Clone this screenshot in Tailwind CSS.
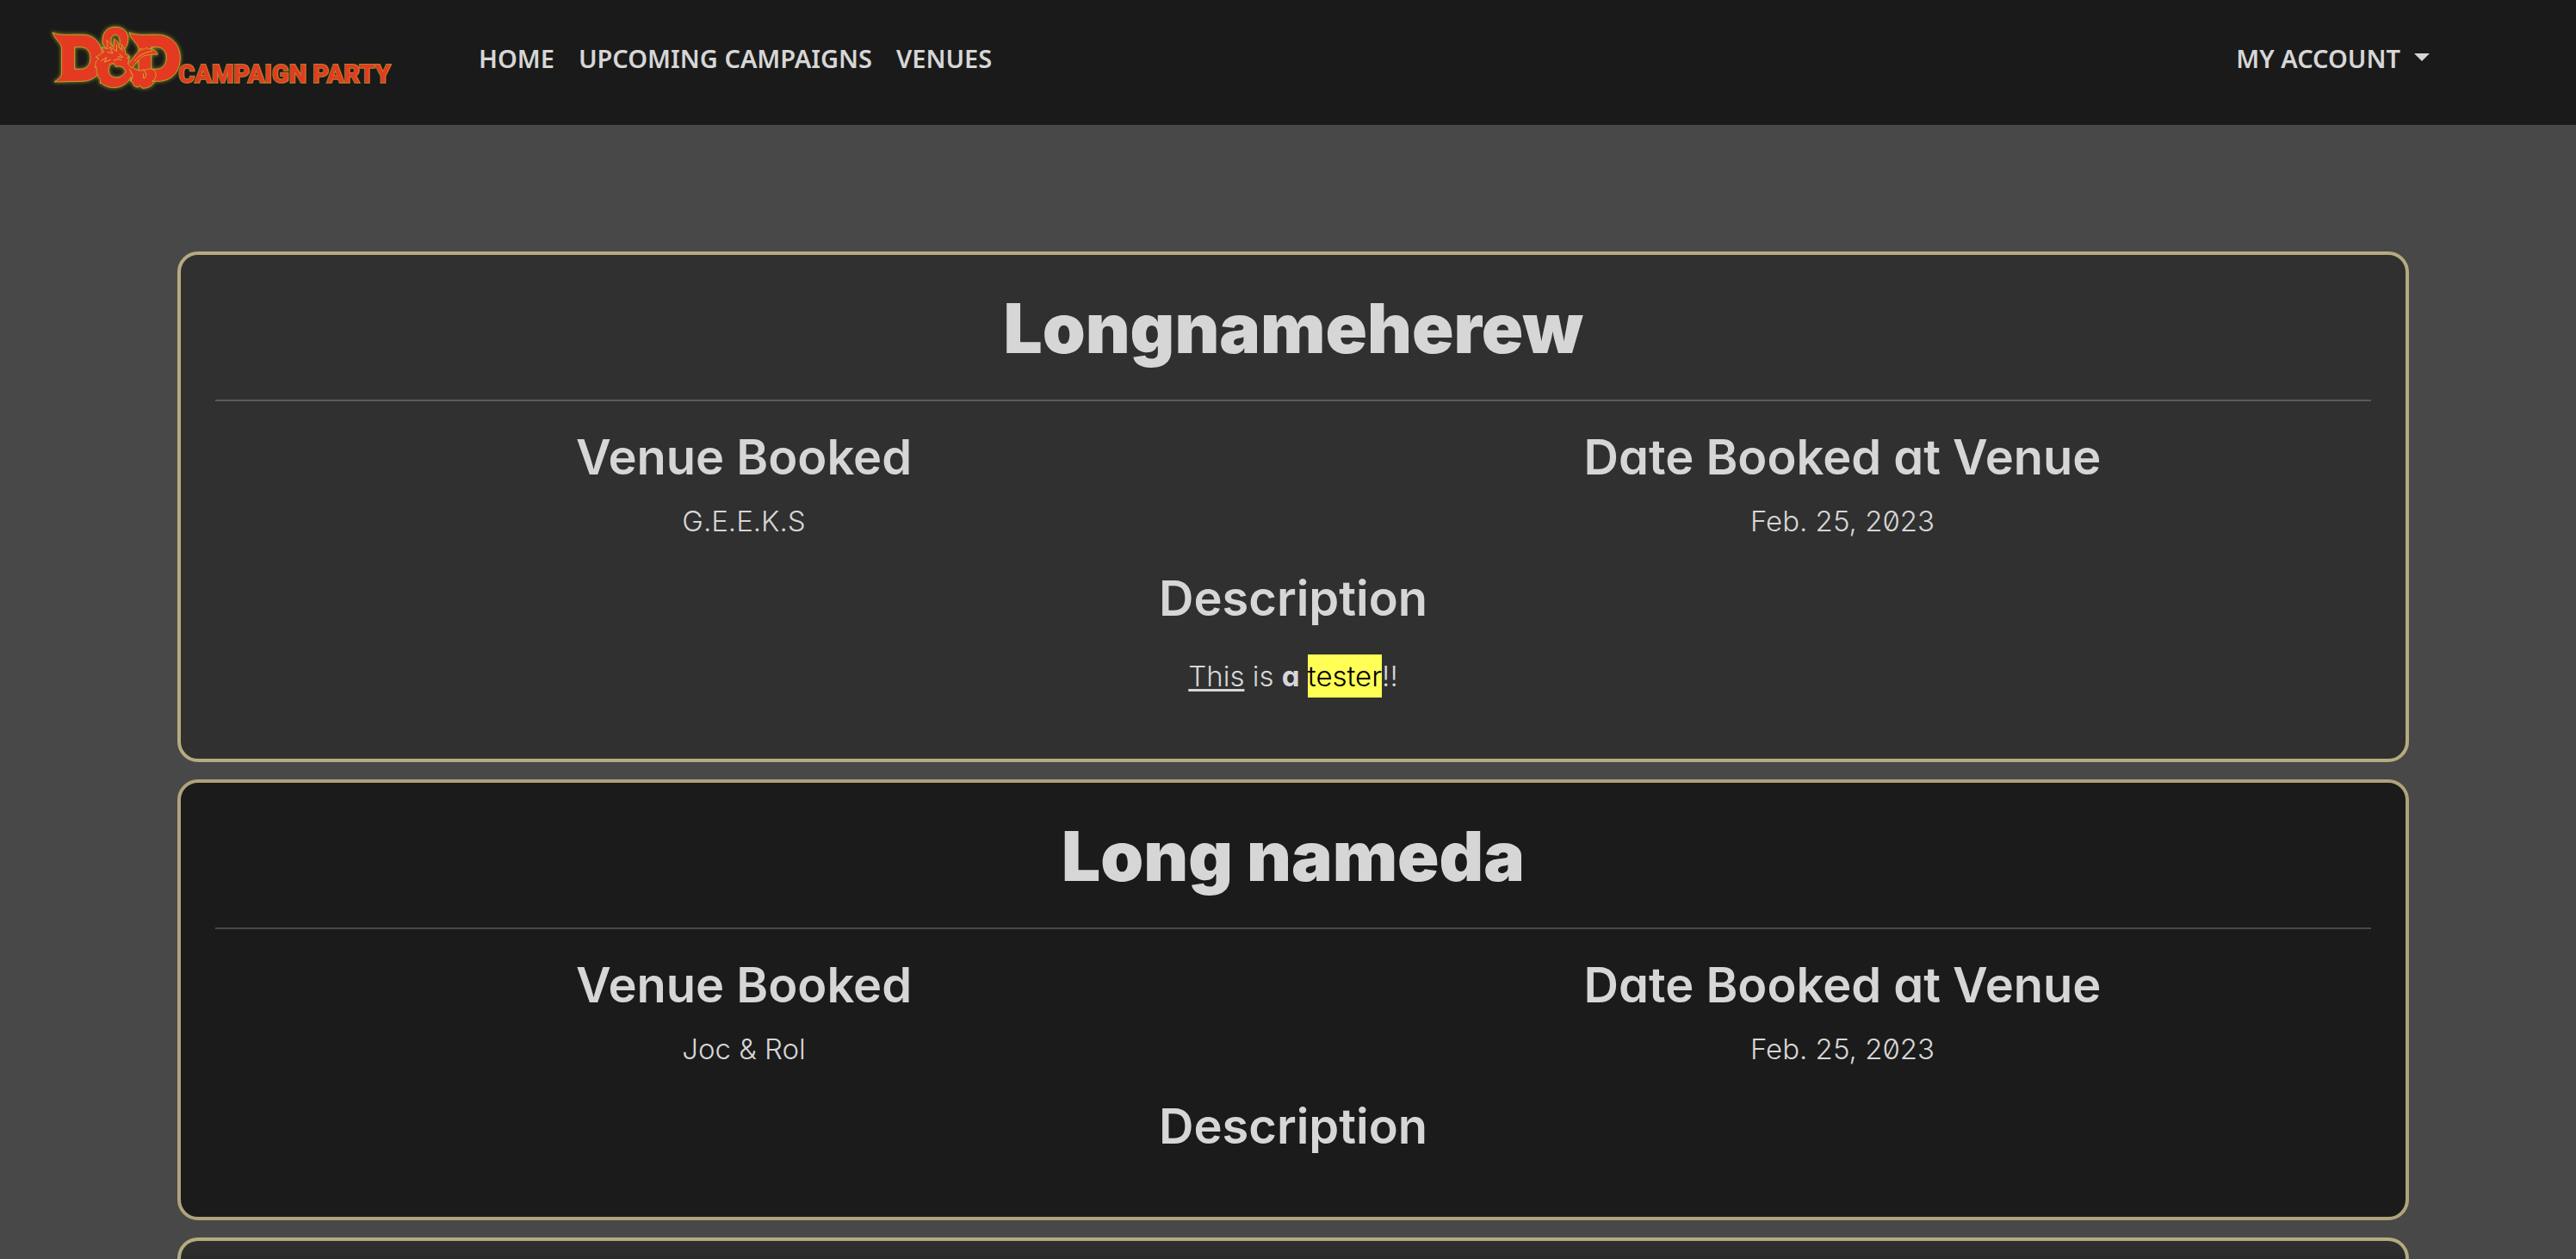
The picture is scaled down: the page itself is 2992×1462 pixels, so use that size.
<!DOCTYPE html>
<html lang="en">
<head>
<meta charset="utf-8">
<meta name="viewport" content="width=device-width, initial-scale=1">
<title>D&amp;D Campaign Party</title>
<script src="https://cdn.jsdelivr.net/npm/@tailwindcss/browser@4"></script>
</head>
<body class="flex h-screen flex-col overflow-hidden bg-[#484848] font-[Inter,sans-serif] text-[#d6d6d6]">

<header class="flex h-[145px] shrink-0 items-start bg-[#1a1a1a] pr-[170px] pl-[55px] font-['Noto_Sans',sans-serif] text-[29px] leading-[48px] font-semibold">
  <a href="#" aria-label="D&amp;D Campaign Party" class="mt-6 shrink-0">
    <svg class="h-[90px] w-[400px]" viewBox="0 0 1200 270">
      <defs>
        <filter id="glow" x="-10%" y="-15%" width="120%" height="130%">
          <feGaussianBlur stdDeviation="7"/>
        </filter>
        <g id="mark" stroke-linejoin="round" fill-rule="evenodd">
          <path d="M18 41C34 50 62 50 90 49L125 49C165 50 192 82 192 130C192 180 166 211 120 211L24 213C42 202 50 196 50 180L50 95C48 76 28 68 18 41ZM95 92L95 169L116 169C140 168 150 152 150 130C150 106 138 92 116 92Z"/>
          <path d="M286 41C302 50 330 50 355 49L385 49C432 51 463 84 463 130C463 178 432 211 385 211L340 211L318 180L318 97C316 78 292 70 286 41ZM362 92L362 169L380 169C403 168 415 152 415 130C415 106 402 92 380 92Z"/>
          <path d="M193 82C188 44 206 23 237 22C268 23 284 42 281 68C279 86 273 96 264 104L249 90C256 80 255 50 238 49C222 50 216 68 226 87L214 105Z"/>
          <path d="M184 205C176 194 170 184 171 160L166 164C168 146 168 140 180 132L168 127C180 122 186 114 197 109L189 93L211 98L207 67L231 94L233 63C246 74 249 83 250 94L262 104L258 82C270 96 272 105 273 117L284 121L278 132L287 124L281 148L292 157C310 178 330 176 350 168C378 164 384 186 374 204L365 211L373 210C368 228 348 236 330 235L323 226C316 236 298 230 299 216L290 210L292 196C278 220 258 233 230 233C209 232 193 224 190 217L184 219ZM218 152C206 184 220 199 243 198C260 196 270 186 273 176L264 162L248 158L239 161L232 148Z"/>
          <path d="M280 151C302 133 306 112 326 103L322 98L338 100L345 94L353 99L367 95L362 101C373 101 382 108 384 118C366 115 350 119 336 123C321 129 308 151 294 165Z"/>
        </g>
      </defs>
      <use href="#mark" fill="#a7a52b" stroke="#a7a52b" stroke-width="6" filter="url(#glow)" opacity="0.75"/>
      <use href="#mark" fill="#e53a22" stroke="#c6a02f" stroke-width="3"/>
      <g fill="none" stroke="#d0ac33" stroke-width="3" stroke-linecap="round" stroke-linejoin="round">
        <path d="M188 139L206 128L199 144L220 136M209 109L228 114L217 91L242 107L241 84M251 116L263 127L246 126M232 139L246 133L258 137"/>
        <path d="M304 140C320 119 342 110 364 106M287 170L298 193L292 209M334 170C345 181 350 192 336 202L334 186"/>
      </g>
      <text x="457" y="217" fill="#e53a22" stroke="#a98426" stroke-width="6" paint-order="stroke" class="font-[Roboto,sans-serif] text-[87px] font-extrabold">CAMPAIGN PARTY</text>
    </svg>
  </a>
  <nav class="mt-11 ml-[101px] flex gap-7" aria-label="Main">
    <a href="#">HOME</a>
    <a href="#">UPCOMING CAMPAIGNS</a>
    <a href="#">VENUES</a>
  </nav>
  <button type="button" class="mt-11 ml-auto flex items-center gap-4">
    MY ACCOUNT
    <svg class="mb-1 h-[9px] w-[18px] fill-current" viewBox="0 0 18 9"><path d="M0 0H18L9 9Z"/></svg>
  </button>
</header>

<main class="flex min-h-0 grow flex-col gap-5 pt-[147px] pr-[194px] pl-[206px] text-center">

  <article class="shrink-0 rounded-3xl border-4 border-[#b5ab80] bg-[#303030] px-10 pt-10 pb-[71px]">
    <h2 class="text-[80px] leading-[90px] font-black">Longnameherew</h2>
    <hr class="mt-[38px] mb-8 border-t-2 border-[#5a5a5a]">
    <div class="-mx-6 grid grid-cols-2">
      <section>
        <h3 class="text-[56px] leading-[66px] font-semibold">Venue Booked</h3>
        <p class="mt-4 text-[33px] leading-[50px] font-light">G.E.E.K.S</p>
      </section>
      <section>
        <h3 class="text-[56px] leading-[66px] font-semibold [font-feature-settings:'cv11']">Date Booked at Venue</h3>
        <p class="mt-4 text-[33px] leading-[50px] font-light [font-feature-settings:'zero']">Feb. 25, 2023</p>
      </section>
    </div>
    <h3 class="mt-8 text-[56px] leading-[66px] font-semibold">Description</h3>
    <p class="mt-8 text-[33px] leading-[50px] font-light [font-feature-settings:'cv11']"><u class="underline decoration-[3px] underline-offset-[3px]">This</u> is <strong class="font-bold">a</strong> <mark class="bg-[#ffff55] py-[5px] text-black">tester</mark>!!</p>
  </article>

  <article class="shrink-0 rounded-3xl border-4 border-[#aea37a] bg-[#1b1b1b] px-10 pt-10 pb-[72px]">
    <h2 class="text-[80px] leading-[90px] font-black">Long nameda</h2>
    <hr class="mt-[38px] mb-8 border-t-2 border-[#494949]">
    <div class="-mx-6 grid grid-cols-2">
      <section>
        <h3 class="text-[56px] leading-[66px] font-semibold">Venue Booked</h3>
        <p class="mt-4 text-[33px] leading-[50px] font-light">Joc &amp; Rol</p>
      </section>
      <section>
        <h3 class="text-[56px] leading-[66px] font-semibold [font-feature-settings:'cv11']">Date Booked at Venue</h3>
        <p class="mt-4 text-[33px] leading-[50px] font-light [font-feature-settings:'zero']">Feb. 25, 2023</p>
      </section>
    </div>
    <h3 class="mt-8 text-[56px] leading-[66px] font-semibold">Description</h3>
  </article>

  <article class="grow rounded-t-3xl border-4 border-b-0 border-[#b5ab80] bg-linear-to-b from-[#303030] to-[#2a2a2a]"></article>
</main>
</body>
</html>
